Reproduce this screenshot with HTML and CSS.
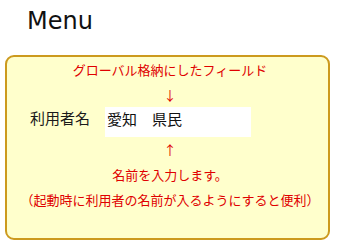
FILE: index.html
```html
<!DOCTYPE html>
<html lang="ja">
<head>
<meta charset="utf-8">
<title>Menu</title>
<link rel="stylesheet" href="styles.css">
</head>
<body>
<h1 class="title">Menu</h1>
<div class="panel">
  <p class="note">グローバル格納にしたフィールド</p>
  <p class="note">↓</p>
  <div class="row">
    <span class="label">利用者名</span>
    <input class="field" type="text" value="愛知　県民">
  </div>
  <p class="note">↑</p>
  <p class="note">名前を入力します。</p>
  <p class="note">（起動時に利用者の名前が入るようにすると便利）</p>
</div>
</body>
</html>
```

FILE: styles.css
```css
html, body {
  margin: 0;
  padding: 0;
  background: #ffffff;
}
body {
  font-family: "Noto Sans CJK JP", "DejaVu Sans", sans-serif;
}
.title {
  margin: 7px 0 0 27px;
  font-family: "DejaVu Sans", sans-serif;
  font-size: 24px;
  font-weight: normal;
  line-height: 28px;
  color: #111111;
}
.panel {
  box-sizing: border-box;
  margin: 20px 0 0 5px;
  width: 325px;
  border: 2px solid #cc9a1e;
  border-radius: 9px;
  background: #ffffcc;
  padding: 0 0 26px 0;
}
.note {
  margin: 0;
  padding-left: 5px;
  text-align: center;
  font-size: 13px;
  line-height: 25px;
  color: #e00000;
}
.row {
  display: flex;
  align-items: center;
  height: 30px;
  padding-left: 23px;
  gap: 15px;
}
.label {
  font-size: 15px;
  line-height: 26px;
  color: #1a1a1a;
  margin-top: -8px;
}
.field {
  box-sizing: border-box;
  width: 146px;
  height: 30px;
  margin: 0;
  border: none;
  outline: none;
  background: #ffffff;
  padding: 0 0 8px 2px;
  font-family: "Noto Sans CJK JP", sans-serif;
  font-size: 15px;
  color: #111111;
}
```
